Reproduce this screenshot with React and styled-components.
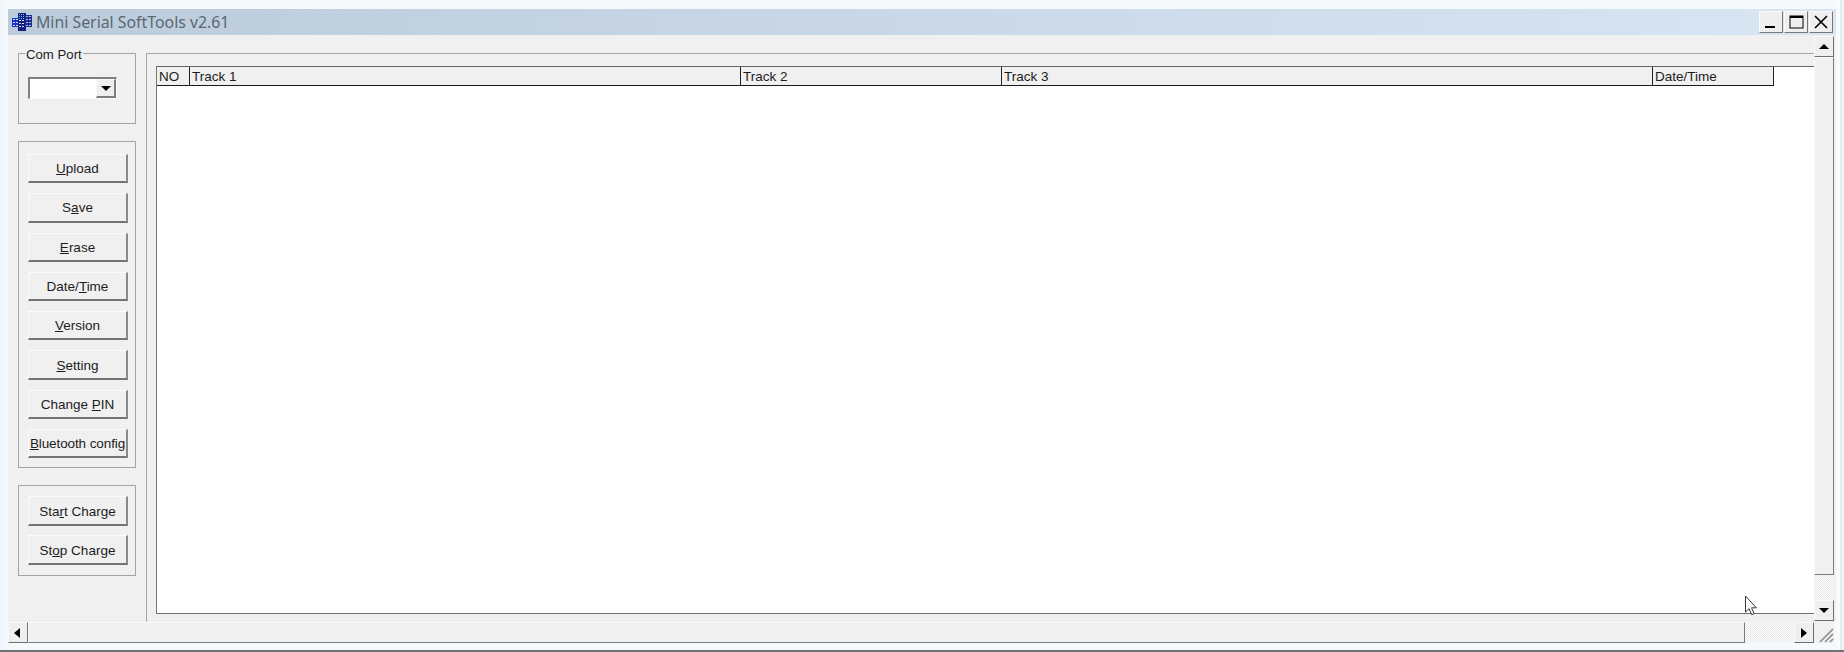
import React from "react";
import styled, { createGlobalStyle } from "styled-components";

const Global = createGlobalStyle`
  html, body { margin: 0; padding: 0; background: #f2f6fb; overflow: hidden; }
  #root { width: 1844px; height: 652px; }
`;

const Screen = styled.div`
  position: relative;
  width: 1844px;
  height: 652px;
  box-sizing: border-box;
  padding: 9px 8px 7px 8px;
  background: linear-gradient(90deg, #eef3fa 0, #f6f9fc 8px, #f6f9fc 1836px, #fbfcfe 1840px, #d6d9dc 1841px, #f2f4f6 1842px);
  border-bottom: 2px solid #6e7276;
  display: flex;
  flex-direction: column;
  font-family: "Liberation Sans", Arial, sans-serif;
  color: #1c1c1c;
`;

const TitleBar = styled.header`
  height: 26px;
  flex: none;
  display: flex;
  align-items: center;
  padding: 0 3px 0 4px;
  background: linear-gradient(90deg, #bccbda 0%, #c4d3e3 30%, #d8e5f3 100%);
`;

const TitleText = styled.span`
  margin-left: 4px;
  font-family: "Noto Sans", sans-serif;
  font-size: 15.85px;
  color: #5a6774;
  flex: 1;
`;

const CaptionButton = styled.button`
  width: 24px;
  height: 22px;
  margin-left: 1px;
  padding: 0;
  box-sizing: border-box;
  background: #efefef;
  border: 1px solid;
  border-color: #fafafa #777 #777 #fafafa;
  display: flex;
  align-items: center;
  justify-content: center;
`;

const Client = styled.div`
  flex: 1;
  display: flex;
  min-height: 0;
  background: #f0f0f0;
`;

const Sidebar = styled.aside`
  width: 138px;
  flex: none;
  box-sizing: border-box;
  padding: 18px 10px 0;
  display: flex;
  flex-direction: column;
  gap: 17px;
`;

const Group = styled.section`
  position: relative;
  box-sizing: border-box;
  width: 118px;
  height: ${(p) => p.$h}px;
  border: 1px solid #a4a4a4;
  display: flex;
  flex-direction: column;
  align-items: flex-start;
  padding: ${(p) => p.$pad}px 0 0 9px;
  gap: ${(p) => p.$gap || 10}px;
`;

const Legend = styled.span`
  position: absolute;
  left: 6px;
  top: -7px;
  padding: 0 1px;
  background: #f0f0f0;
  font-size: 13.2px;
  line-height: 16px;
`;

const Combo = styled.div`
  width: 89px;
  height: 22px;
  box-sizing: border-box;
  background: #fff;
  border: 1px solid;
  border-width: 2px 1px 1px 2px;
  border-color: #808080 #f6f6f6 #fbfbfb #808080;
  display: flex;
  justify-content: flex-end;
`;

const ComboArrow = styled.div`
  width: 20px;
  box-sizing: border-box;
  background: #efefef;
  border: 1px solid;
  border-width: 1px 2px 2px 1px;
  border-color: #fafafa #7c7c7c #7c7c7c #fafafa;
  display: flex;
  align-items: center;
  justify-content: center;
`;

const ActionButton = styled.button`
  width: 100px;
  height: ${(p) => p.$h || 29.3}px;
  flex: none;
  box-sizing: border-box;
  padding: 1px 0 0;
  background: #f0f0f0;
  border: 0;
  border-top: 1px solid #fbfbfb;
  border-left: 1px solid #fbfbfb;
  border-right: 2px solid #8a8a8a;
  border-bottom: 2px solid #747474;
  font-family: "Liberation Sans", Arial, sans-serif;
  font-size: 13.5px;
  color: #1c1c1c;
  white-space: nowrap;
  letter-spacing: ${(p) => (p.$tight ? "-0.1px" : "0")};
`;

const Main = styled.main`
  flex: 1;
  margin-top: 18px;
  min-width: 0;
  box-sizing: border-box;
  border-top: 1px solid #a4a4a4;
  border-left: 1px solid #a4a4a4;
  padding: 12px 0 8px 9px;
  display: flex;
`;

const Table = styled.div`
  flex: 1;
  background: #fff;
  border-top: 1px solid #666;
  border-left: 1px solid #777;
  border-bottom: 1px solid #707070;
  display: flex;
  flex-direction: column;
`;

const HeaderRow = styled.div`
  display: flex;
  height: 19px;
  flex: none;
`;

const HeaderCell = styled.div`
  width: ${(p) => p.$w}px;
  flex: none;
  box-sizing: border-box;
  height: 19px;
  line-height: 20px;
  padding-left: 2px;
  background: #f0f0f0;
  border-right: 1px solid #222;
  border-bottom: 1px solid #1a1a1a;
  font-size: 13.5px;
  white-space: nowrap;
  overflow: hidden;
`;

const VBar = styled.div`
  width: 20px;
  flex: none;
  display: flex;
  flex-direction: column;
  height: 585px;
  margin-top: 1px;
`;

const RightGutter = styled.div`
  width: 2px;
  flex: none;
`;

const ScrollBtn = styled.div`
  flex: none;
  box-sizing: border-box;
  width: 20px;
  height: 21px;
  padding-right: ${(p) => p.$nudge || 0}px;
  background: #efefef;
  border: 1px solid;
  border-color: #fafafa #6f6f6f #6f6f6f #fafafa;
  display: flex;
  align-items: center;
  justify-content: center;
`;

const Thumb = styled.div`
  flex: none;
  box-sizing: border-box;
  width: ${(p) => p.$w || "auto"};
  height: ${(p) => p.$hh || "auto"};
  background: #f0f0f0;
  border: 1px solid;
  border-color: #fafafa #7a7a7a #7a7a7a #fafafa;
`;

const Trough = styled.div`
  flex: 1;
  background: repeating-conic-gradient(#ebebeb 0 25%, #fbfbfb 0 50%) 0 0 / 2px 2px;
`;

const HBar = styled.div`
  flex: none;
  height: 21px;
  display: flex;
  padding-right: 2px;
`;

const Grip = styled.div`
  width: 20px;
  flex: none;
  background: #f0f0f0;
  display: flex;
  align-items: flex-end;
  justify-content: flex-end;
`;

const CursorMark = styled.svg`
  position: absolute;
  left: 1744px;
  top: 595px;
`;

const Tri = ({ d }) => {
  const pts = { up: "0,5 10,5 5,0", down: "0,0 10,0 5,5", left: "6,0 6,10 0,5", right: "0,0 0,10 6,5" }[d];
  const vertical = d === "up" || d === "down";
  return (
    <svg width={vertical ? 10 : 6} height={vertical ? 5 : 10} viewBox={vertical ? "0 0 10 5" : "0 0 6 10"}>
      <polygon points={pts} fill="#000" />
    </svg>
  );
};

const AppIcon = () => (
  <svg width="20" height="18" viewBox="0 0 20 18" shapeRendering="crispEdges">
    <rect x="0" y="5" width="7" height="9" fill="#1c2fd0" />
    <rect x="6" y="0" width="8" height="18" fill="#15207e" />
    <rect x="13" y="2" width="7" height="12" fill="#1e2a90" />
    {[1, 4].flatMap((x) => [6, 9, 12].map((y) => <rect key={`a${x}${y}`} x={x} y={y} width="2" height="1" fill="#cfdcff" />))}
    {[7, 9, 11].flatMap((x) => [1, 3, 5].map((y) => <rect key={`b${x}${y}`} x={x} y={y} width="1" height="1" fill="#4fc3ff" />))}
    {[7, 10].flatMap((x) => [7, 10, 13].map((y) => <rect key={`d${x}${y}`} x={x} y={y} width="2" height="1" fill="#d8e2ff" />))}
    {[14, 17].flatMap((x) => [3, 6, 9, 12].map((y) => <rect key={`c${x}${y}`} x={x} y={y} width="2" height="1" fill="#aab8f0" />))}
  </svg>
);

const columns = [
  { w: 33, t: "NO" },
  { w: 551, t: "Track 1" },
  { w: 261, t: "Track 2" },
  { w: 651, t: "Track 3" },
  { w: 121, t: "Date/Time" },
];

const Underlined = ({ pre, u, post }) => (
  <>
    {pre}
    <u>{u}</u>
    {post}
  </>
);

const mainButtons = [
  ["", "U", "pload"],
  ["S", "a", "ve"],
  ["", "E", "rase"],
  ["Date/", "T", "ime"],
  ["", "V", "ersion"],
  ["", "S", "etting"],
  ["Change ", "P", "IN"],
  ["", "B", "luetooth config"],
];

export default function App() {
  return (
    <Screen>
      <Global />
      <TitleBar>
        <AppIcon />
        <TitleText>Mini Serial SoftTools v2.61</TitleText>
        <CaptionButton aria-label="minimize">
          <svg width="14" height="14" viewBox="0 0 14 14"><rect x="1" y="11" width="10" height="2" fill="#000" /></svg>
        </CaptionButton>
        <CaptionButton aria-label="maximize">
          <svg width="15" height="14" viewBox="0 0 15 14"><path d="M1 1.5h13M1 2.5h13" stroke="#000" fill="none" /><rect x="1" y="1" width="13" height="12" fill="none" stroke="#000" /></svg>
        </CaptionButton>
        <CaptionButton aria-label="close">
          <svg width="16" height="16" viewBox="0 0 16 16"><path d="M2 2l12 12M14 2L2 14" stroke="#000" strokeWidth="1.6" fill="none" /></svg>
        </CaptionButton>
      </TitleBar>
      <Client>
        <Sidebar>
          <Group $h={71} $pad={23}>
            <Legend>Com Port</Legend>
            <Combo>
              <ComboArrow><Tri d="down" /></ComboArrow>
            </Combo>
          </Group>
          <Group $h={327} $pad={12}>
            {mainButtons.map(([a, b, c]) => (
              <ActionButton key={a + b + c} $tight={c.length > 10}>
                <Underlined pre={a} u={b} post={c} />
              </ActionButton>
            ))}
          </Group>
          <Group $h={91} $pad={10} $gap={9}>
            <ActionButton $h={30}><Underlined pre="Sta" u="r" post="t Charge" /></ActionButton>
            <ActionButton $h={30}><Underlined pre="St" u="o" post="p Charge" /></ActionButton>
          </Group>
        </Sidebar>
        <Main>
          <Table>
            <HeaderRow>
              {columns.map((c) => (
                <HeaderCell key={c.t} $w={c.w}>{c.t}</HeaderCell>
              ))}
            </HeaderRow>
          </Table>
        </Main>
        <VBar>
          <ScrollBtn><Tri d="up" /></ScrollBtn>
          <Thumb $hh="518px" />
          <Trough />
          <ScrollBtn><Tri d="down" /></ScrollBtn>
        </VBar>
        <RightGutter />
      </Client>
      <HBar>
        <ScrollBtn $nudge={2}><Tri d="left" /></ScrollBtn>
        <Thumb $w="1717px" />
        <Trough />
        <ScrollBtn><Tri d="right" /></ScrollBtn>
        <Grip>
          <svg width="16" height="16" viewBox="0 0 16 16">
            <path d="M15 2L2 15M15 7L7 15M15 12L12 15" stroke="#8c8c8c" strokeWidth="1.6" fill="none" />
          </svg>
        </Grip>
      </HBar>
      <CursorMark width="14" height="22" viewBox="0 0 14 22">
        <path d="M1.5 1v16l3.6-3.3 2.6 6 2.4-1-2.6-5.9h4.8z" fill="#fff" stroke="#30343a" strokeWidth="1" />
      </CursorMark>
    </Screen>
  );
}
